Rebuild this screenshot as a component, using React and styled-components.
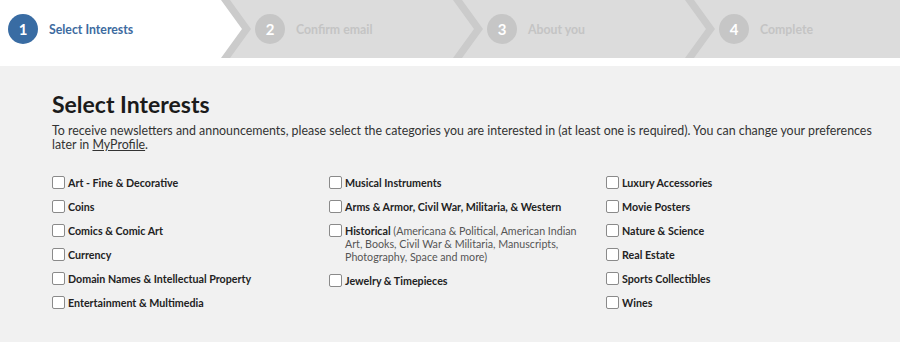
import React from "react";
import styled, { createGlobalStyle } from "styled-components";

const GlobalStyle = createGlobalStyle`
  html, body { margin: 0; padding: 0; }
  body {
    font-family: "Lato", "Open Sans", sans-serif;
    background: #f1f1f1;
    color: #222;
  }
`;

const Header = styled.header`
  border-bottom: 8px solid #ffffff;
`;

const Stepper = styled.nav`
  display: flex;
  height: 58px;
  background: #dcdcdc;
  overflow: hidden;
`;

const Step = styled.div`
  position: relative;
  flex: 0 0 ${(p) => (p.$first ? "247px" : "232px")};
  display: flex;
  align-items: center;
  gap: 11px;
  padding-left: 8px;
  box-sizing: border-box;
  &::before {
    content: "";
    display: ${(p) => (p.$active ? "block" : "none")};
    position: absolute;
    top: 0;
    bottom: 0;
    left: 0;
    right: -4px;
    background: #ffffff;
    clip-path: polygon(
      0 0,
      calc(100% - 29px) 0,
      calc(100% - 8px) 50%,
      calc(100% - 29px) 100%,
      0 100%
    );
  }
`;

const Chevron = styled.svg`
  position: absolute;
  top: 0;
  right: -4px;
  width: 30px;
  height: 58px;
  z-index: 1;
`;

const Circle = styled.span`
  position: relative;
  z-index: 2;
  width: 30px;
  height: 30px;
  border-radius: 50%;
  background: ${(p) => (p.$active ? "#396ca3" : "#c6c6c6")};
  color: #ffffff;
  display: flex;
  align-items: center;
  justify-content: center;
  font-weight: 700;
  font-size: 15px;
  flex: none;
`;

const StepLabel = styled.span`
  position: relative;
  z-index: 2;
  font-weight: 700;
  font-size: 12.3px;
  color: ${(p) => (p.$active ? "#3d6b9f" : "#c4c4c4")};
`;

const Main = styled.main`
  padding: 25px 20px 30px 52px;
`;

const Title = styled.h1`
  margin: 0 0 7px;
  font-size: 23px;
  line-height: 26px;
  font-weight: 700;
  color: #1b1b1b;
`;

const Intro = styled.p`
  margin: 0 0 24px;
  font-size: 12.4px;
  line-height: 14px;
  color: #333333;
`;

const Link = styled.a`
  color: #333333;
  text-decoration: underline;
`;

const Grid = styled.div`
  display: grid;
  grid-template-columns: 277px 277px 1fr;
`;

const Column = styled.div`
  display: flex;
  flex-direction: column;
  gap: 11px;
`;

const Item = styled.label`
  display: flex;
  align-items: flex-start;
  gap: 3px;
  padding-right: 15px;
  font-size: 10.7px;
  line-height: 13px;
  color: #555555;
`;

const Box = styled.span`
  flex: none;
  width: 11px;
  height: 11px;
  border: 1px solid #8a8a8a;
  border-radius: 2px;
  background: #ffffff;
`;

const Name = styled.span`
  font-weight: 700;
  color: #222222;
`;

const steps = ["Select Interests", "Confirm email", "About you", "Complete"];

const columns = [
  [
    { name: "Art - Fine & Decorative" },
    { name: "Coins" },
    { name: "Comics & Comic Art" },
    { name: "Currency" },
    { name: "Domain Names & Intellectual Property" },
    { name: "Entertainment & Multimedia" },
  ],
  [
    { name: "Musical Instruments" },
    { name: "Arms & Armor, Civil War, Militaria, & Western" },
    {
      name: "Historical",
      note: " (Americana & Political, American Indian Art, Books, Civil War & Militaria, Manuscripts, Photography, Space and more)",
    },
    { name: "Jewelry & Timepieces" },
  ],
  [
    { name: "Luxury Accessories" },
    { name: "Movie Posters" },
    { name: "Nature & Science" },
    { name: "Real Estate" },
    { name: "Sports Collectibles" },
    { name: "Wines" },
  ],
];

export default function App() {
  return (
    <>
      <GlobalStyle />
      <Header>
        <Stepper>
          {steps.map((s, i) => (
            <Step key={s} $active={i === 0} $first={i === 0}>
              <Circle $active={i === 0}>{i + 1}</Circle>
              <StepLabel $active={i === 0}>{s}</StepLabel>
              {i < steps.length - 1 && (
                <Chevron viewBox="0 0 30 58" aria-hidden="true">
                  <polygon points="0,0 9,0 30,29 9,58 0,58 21,29" fill="#cbcbcb" />
                </Chevron>
              )}
            </Step>
          ))}
        </Stepper>
      </Header>
      <Main>
        <Title>Select Interests</Title>
        <Intro>
          To receive newsletters and announcements, please select the categories you are
          interested in (at least one is required). You can change your preferences later in{" "}
          <Link href="#">MyProfile</Link>.
        </Intro>
        <Grid>
          {columns.map((col, ci) => (
            <Column key={ci}>
              {col.map((it) => (
                <Item key={it.name}>
                  <Box />
                  <span>
                    <Name>{it.name}</Name>
                    {it.note}
                  </span>
                </Item>
              ))}
            </Column>
          ))}
        </Grid>
      </Main>
    </>
  );
}
